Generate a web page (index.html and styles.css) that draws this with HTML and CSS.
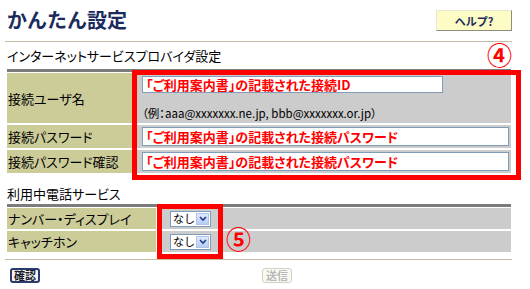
FILE: index.html
```html
<!DOCTYPE html>
<html lang="ja">
<head>
  <meta charset="UTF-8">
  <title>かんたん設定</title>
  <link rel="stylesheet" href="styles.css">
</head>
<body>
  <div class="page">
    <div class="head">
      <h1 class="title">かんたん設定</h1>
      <button class="help">ヘルプ?</button>
    </div>
    <div class="rule"></div>

    <h2 class="sec">インターネットサービスプロバイダ設定</h2>
    <div class="ftable isp">
      <div class="row tall">
        <div class="lbl">接続ユーザ名</div>
        <div class="val">
          <input class="txt short" type="text" value="「ご利用案内書」の記載された接続ID">
          <div class="note">（例：aaa@xxxxxxx.ne.jp, bbb@xxxxxxx.or.jp）</div>
        </div>
      </div>
      <div class="row">
        <div class="lbl">接続パスワード</div>
        <div class="val"><input class="txt" type="text" value="「ご利用案内書」の記載された接続パスワード"></div>
      </div>
      <div class="row">
        <div class="lbl">接続パスワード確認</div>
        <div class="val"><input class="txt" type="text" value="「ご利用案内書」の記載された接続パスワード"></div>
      </div>
    </div>

    <h2 class="sec sec2">利用中電話サービス</h2>
    <div class="ftable phone">
      <div class="row">
        <div class="lbl">ナンバー・ディスプレイ</div>
        <div class="val">
          <span class="sel"><span class="opt">なし</span><span class="arr"><svg width="8" height="6" viewBox="0 0 8 6"><path d="M1 1 L4 4 L7 1" fill="none" stroke="#1d3c8c" stroke-width="1.6"/></svg></span></span>
        </div>
      </div>
      <div class="row">
        <div class="lbl">キャッチホン</div>
        <div class="val">
          <span class="sel"><span class="opt">なし</span><span class="arr"><svg width="8" height="6" viewBox="0 0 8 6"><path d="M1 1 L4 4 L7 1" fill="none" stroke="#1d3c8c" stroke-width="1.6"/></svg></span></span>
        </div>
      </div>
    </div>
    <div class="rule rule2"></div>

    <div class="actions">
      <button class="btn">確認</button>
      <button class="btn" disabled>送信</button>
    </div>

    <div class="mark box4"></div>
    <div class="num n4">④</div>
    <div class="mark box5"></div>
    <div class="num n5">⑤</div>
  </div>
</body>
</html>
```

FILE: styles.css
```css
body {
  margin: 0;
  background: #fff;
  color: #000;
  font-family: "Noto Sans CJK JP", "Liberation Sans", sans-serif;
}
.page {
  position: relative;
  width: 530px;
  height: 289px;
  padding-top: 8px;
  box-sizing: border-box;
}
.head {
  display: flex;
  justify-content: space-between;
  align-items: flex-start;
  margin: 0 18px 0 7px;
}
.title {
  margin: 0;
  font-size: 20px;
  line-height: 24px;
  font-weight: bold;
  color: #1b2b5e;
}
.help {
  margin-top: 2px;
  width: 76px;
  height: 21px;
  padding: 0;
  background: #fcfcc4;
  border: 1px solid;
  border-color: #e8e8d8 #8c8c80 #8c8c80 #e8e8d8;
  font-family: "Noto Sans CJK JP", sans-serif;
  font-size: 11px;
  font-weight: bold;
  color: #1b2b5e;
}
.rule {
  margin: 9px 18px 0 5px;
  border-top: 1px solid #c4bca0;
}
.sec {
  margin: 6px 0 0 7px;
  font-size: 13px;
  line-height: 16px;
  font-weight: normal;
  font-feature-settings: "palt";
}
.sec2 {
  margin-top: 13px;
}
.ftable {
  margin: 5px 19px 0 7px;
  padding-top: 1px;
  border-top: 3px solid #7c7c7c;
  display: flex;
  flex-direction: column;
  gap: 2px;
}
.row {
  display: grid;
  grid-template-columns: 125px 1fr;
  column-gap: 2px;
  height: 23px;
}
.row.tall {
  height: 50px;
}
.lbl {
  background: #cccc99;
  display: flex;
  align-items: center;
  padding-left: 1px;
  font-size: 13px;
  font-feature-settings: "palt";
}
.val {
  background: #cccccc;
  display: flex;
  align-items: center;
  padding: 0 2px 0 8px;
}
.row.tall .val {
  flex-direction: column;
  align-items: flex-start;
  padding-top: 3px;
}
.txt {
  width: 367px;
  height: 19px;
  box-sizing: border-box;
  margin: 0;
  padding: 0 0 0 3px;
  border: 1px solid #7f9db9;
  background: #fff;
  font-family: "Noto Sans CJK JP", sans-serif;
  font-size: 13px;
  font-weight: bold;
  color: #ff0000;
  font-feature-settings: "palt";
}
.txt.short {
  width: 301px;
  height: 17px;
}
.note {
  margin-top: 13px;
  font-size: 11.5px;
  line-height: 14px;
  font-feature-settings: "palt";
}
.phone {
  margin-top: 2px;
}
.phone .row {
  grid-template-columns: 149px 1fr;
  height: 21px;
}
.phone .val {
  padding-left: 12px;
}
.sel {
  display: inline-flex;
  align-items: center;
  width: 41px;
  height: 16px;
  box-sizing: border-box;
  padding: 0 1px 0 2px;
  border: 1px solid #7f9db9;
  background: #fff;
  font-size: 11px;
  line-height: 13px;
  white-space: nowrap;
}
.opt {
  flex: none;
}
.arr {
  flex: none;
  margin-left: auto;
  width: 13px;
  height: 12px;
  display: flex;
  align-items: center;
  justify-content: center;
  background: linear-gradient(#dfe9fc, #b7cdf4);
  border: 1px solid #b0c4ea;
  box-sizing: border-box;
}
.rule2 {
  margin-top: 7px;
}
.actions {
  display: grid;
  grid-template-columns: 252px auto;
  justify-items: start;
  margin-top: 8px;
  padding-left: 10px;
}
.btn {
  height: 15px;
  padding: 0 2px;
  box-sizing: border-box;
  border: 2px solid #2a3a6a;
  border-radius: 3px;
  background: #f2f2f2;
  color: #1a1a2a;
  font-family: "Noto Sans CJK JP", sans-serif;
  font-size: 11px;
  font-weight: bold;
  line-height: 11px;
}
.btn:disabled {
  border: 1px solid #d0d0c4;
  background: #fafaf2;
  color: #b8b8b8;
  padding: 0 3px;
}
.mark {
  position: absolute;
  border: 5px solid #ff0000;
  box-sizing: border-box;
}
.box4 {
  left: 132px;
  top: 70px;
  width: 389px;
  height: 110px;
}
.box5 {
  left: 157px;
  top: 204px;
  width: 66px;
  height: 55px;
}
.num {
  position: absolute;
  font-size: 25px;
  line-height: 25px;
  font-weight: bold;
  color: #ff0000;
}
.n4 {
  left: 487px;
  top: 42px;
}
.n5 {
  left: 226px;
  top: 226px;
}
```
